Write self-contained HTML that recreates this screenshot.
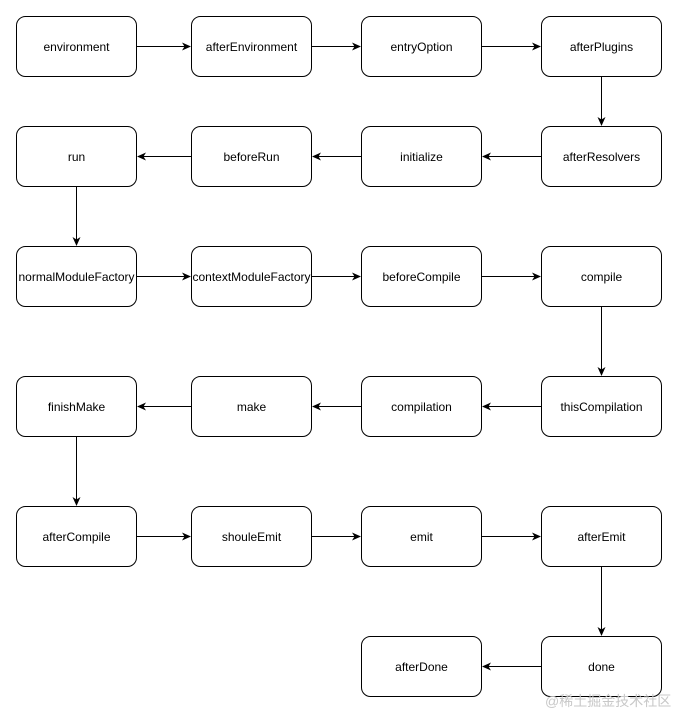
<!DOCTYPE html>
<html><head><meta charset="utf-8"><style>
html,body{margin:0;padding:0;background:#fff;}
svg{display:block;}
</style></head><body>
<svg width="678" height="713" xmlns="http://www.w3.org/2000/svg" font-family="Liberation Sans, Arial, sans-serif" font-size="12">
<defs><marker id="a" markerWidth="10" markerHeight="10" refX="8" refY="4" orient="auto" markerUnits="userSpaceOnUse"><path d="M0,0 L9,4 L0,8 L2.5,4 Z" fill="#000"/></marker></defs>
<g fill="#fff" stroke="#000" stroke-width="1">
<rect x="16.5" y="16.5" width="120" height="60" rx="9"/><rect x="191.5" y="16.5" width="120" height="60" rx="9"/><rect x="361.5" y="16.5" width="120" height="60" rx="9"/><rect x="541.5" y="16.5" width="120" height="60" rx="9"/>
<rect x="16.5" y="126.5" width="120" height="60" rx="9"/><rect x="191.5" y="126.5" width="120" height="60" rx="9"/><rect x="361.5" y="126.5" width="120" height="60" rx="9"/><rect x="541.5" y="126.5" width="120" height="60" rx="9"/>
<rect x="16.5" y="246.5" width="120" height="60" rx="9"/><rect x="191.5" y="246.5" width="120" height="60" rx="9"/><rect x="361.5" y="246.5" width="120" height="60" rx="9"/><rect x="541.5" y="246.5" width="120" height="60" rx="9"/>
<rect x="16.5" y="376.5" width="120" height="60" rx="9"/><rect x="191.5" y="376.5" width="120" height="60" rx="9"/><rect x="361.5" y="376.5" width="120" height="60" rx="9"/><rect x="541.5" y="376.5" width="120" height="60" rx="9"/>
<rect x="16.5" y="506.5" width="120" height="60" rx="9"/><rect x="191.5" y="506.5" width="120" height="60" rx="9"/><rect x="361.5" y="506.5" width="120" height="60" rx="9"/><rect x="541.5" y="506.5" width="120" height="60" rx="9"/>
<rect x="361.5" y="636.5" width="120" height="60" rx="9"/><rect x="541.5" y="636.5" width="120" height="60" rx="9"/>
</g>
<g stroke="#000" stroke-width="1" marker-end="url(#a)">
<line x1="137" y1="46.5" x2="190" y2="46.5"/><line x1="312" y1="46.5" x2="360" y2="46.5"/><line x1="482" y1="46.5" x2="540" y2="46.5"/>
<line x1="601.5" y1="77" x2="601.5" y2="125"/>
<line x1="541" y1="156.5" x2="483" y2="156.5"/><line x1="361" y1="156.5" x2="313" y2="156.5"/><line x1="191" y1="156.5" x2="138" y2="156.5"/>
<line x1="76.5" y1="187" x2="76.5" y2="245"/>
<line x1="137" y1="276.5" x2="190" y2="276.5"/><line x1="312" y1="276.5" x2="360" y2="276.5"/><line x1="482" y1="276.5" x2="540" y2="276.5"/>
<line x1="601.5" y1="307" x2="601.5" y2="375"/>
<line x1="541" y1="406.5" x2="483" y2="406.5"/><line x1="361" y1="406.5" x2="313" y2="406.5"/><line x1="191" y1="406.5" x2="138" y2="406.5"/>
<line x1="76.5" y1="437" x2="76.5" y2="505"/>
<line x1="137" y1="536.5" x2="190" y2="536.5"/><line x1="312" y1="536.5" x2="360" y2="536.5"/><line x1="482" y1="536.5" x2="540" y2="536.5"/>
<line x1="601.5" y1="567" x2="601.5" y2="635"/>
<line x1="541" y1="666.5" x2="483" y2="666.5"/>
</g>
<g text-anchor="middle" fill="#000">
<text x="76.5" y="51">environment</text><text x="251.5" y="51">afterEnvironment</text><text x="421.5" y="51">entryOption</text><text x="601.5" y="51">afterPlugins</text>
<text x="76.5" y="161">run</text><text x="251.5" y="161">beforeRun</text><text x="421.5" y="161">initialize</text><text x="601.5" y="161">afterResolvers</text>
<text x="76.5" y="281">normalModuleFactory</text><text x="251.5" y="281">contextModuleFactory</text><text x="421.5" y="281">beforeCompile</text><text x="601.5" y="281">compile</text>
<text x="76.5" y="411">finishMake</text><text x="251.5" y="411">make</text><text x="421.5" y="411">compilation</text><text x="601.5" y="411">thisCompilation</text>
<text x="76.5" y="541">afterCompile</text><text x="251.5" y="541">shouleEmit</text><text x="421.5" y="541">emit</text><text x="601.5" y="541">afterEmit</text>
<text x="421.5" y="671">afterDone</text><text x="601.5" y="671">done</text>
</g>
<text x="545" y="706" font-size="14" fill="#c8c8c8" font-family="Liberation Sans, Noto Sans CJK SC, sans-serif">@稀土掘金技术社区</text>
</svg>
</body></html>
